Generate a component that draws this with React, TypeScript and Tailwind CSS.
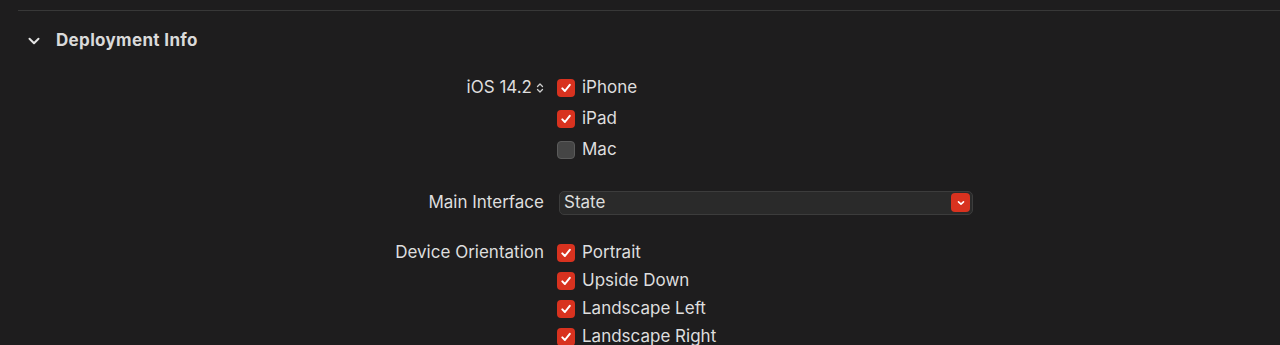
import React from "react";

const font = { fontFamily: '"Inter", "Liberation Sans", sans-serif' };

const Check: React.FC<{ checked: boolean }> = ({ checked }) =>
  checked ? (
    <span className="flex h-[18px] w-[18px] items-center justify-center rounded-[4px] bg-[#d8321f]">
      <svg width="12" height="12" viewBox="0 0 12 12" fill="none">
        <path d="M2.3 6.4 L4.9 9 L9.8 2.8" stroke="white" strokeWidth="2" strokeLinecap="round" strokeLinejoin="round" />
      </svg>
    </span>
  ) : (
    <span className="h-[18px] w-[18px] rounded-[4px] border border-[#5b5b5b] bg-[#454545]" />
  );

const Option: React.FC<{ label: string; checked: boolean; h: string }> = ({ label, checked, h }) => (
  <div className={`flex items-center gap-[7px] ${h}`}>
    <Check checked={checked} />
    <span>{label}</span>
  </div>
);

const App: React.FC = () => {
  const devices = [
    { label: "iPhone", checked: true },
    { label: "iPad", checked: true },
    { label: "Mac", checked: false },
  ];
  const orientations = ["Portrait", "Upside Down", "Landscape Left", "Landscape Right"];

  return (
    <div className="h-[345px] w-[1280px] overflow-hidden bg-[#1e1d1e] text-[17px] text-[#dedede]" style={font}>
      <div className="pt-[10px] pl-[18px]">
        <div className="h-px bg-[#383838]" />
      </div>

      <div className="mt-[16px] flex h-[28px] items-center pl-[27px]">
        <svg width="14" height="14" viewBox="0 0 14 14" fill="none">
          <path d="M2.5 4.8 L7 9.2 L11.5 4.8" stroke="#e4e4e4" strokeWidth="2" strokeLinecap="round" strokeLinejoin="round" />
        </svg>
        <span className="ml-[15px] text-[17px] font-bold tracking-[0.02em] text-[#dadada]">Deployment Info</span>
      </div>

      <div className="mt-[17px] flex">
        <div className="flex h-[31px] w-[544px] items-center justify-end">
          <span>iOS 14.2</span>
          <svg className="ml-[4px]" width="8" height="12" viewBox="0 0 8 12" fill="none">
            <path d="M1.5 4.5 L4 2 L6.5 4.5 M1.5 7.5 L4 10 L6.5 7.5" stroke="#cfcfcf" strokeWidth="1.3" strokeLinecap="round" strokeLinejoin="round" />
          </svg>
        </div>
        <div className="ml-[13px] flex flex-col">
          {devices.map((d) => (
            <Option key={d.label} label={d.label} checked={d.checked} h="h-[31px]" />
          ))}
        </div>
      </div>

      <div className="mt-[25px] flex items-center">
        <div className="w-[544px] text-right">Main Interface</div>
        <div className="ml-[15px] flex h-[24px] w-[414px] items-center justify-between rounded-[5px] border border-[#3c3c3c] bg-[#2a2a2a] pl-[4px] pr-[2px]">
          <span>State</span>
          <span className="flex h-[19px] w-[19px] items-center justify-center rounded-[4px] bg-[#d8321f]">
            <svg width="10" height="10" viewBox="0 0 10 10" fill="none">
              <path d="M2.5 3.8 L5 6.2 L7.5 3.8" stroke="white" strokeWidth="1.6" strokeLinecap="round" strokeLinejoin="round" />
            </svg>
          </span>
        </div>
      </div>

      <div className="mt-[23px] flex">
        <div className="flex h-[28px] w-[544px] items-center justify-end">Device Orientation</div>
        <div className="ml-[13px] flex flex-col">
          {orientations.map((o) => (
            <Option key={o} label={o} checked h="h-[28px]" />
          ))}
        </div>
      </div>
    </div>
  );
};

export default App;
